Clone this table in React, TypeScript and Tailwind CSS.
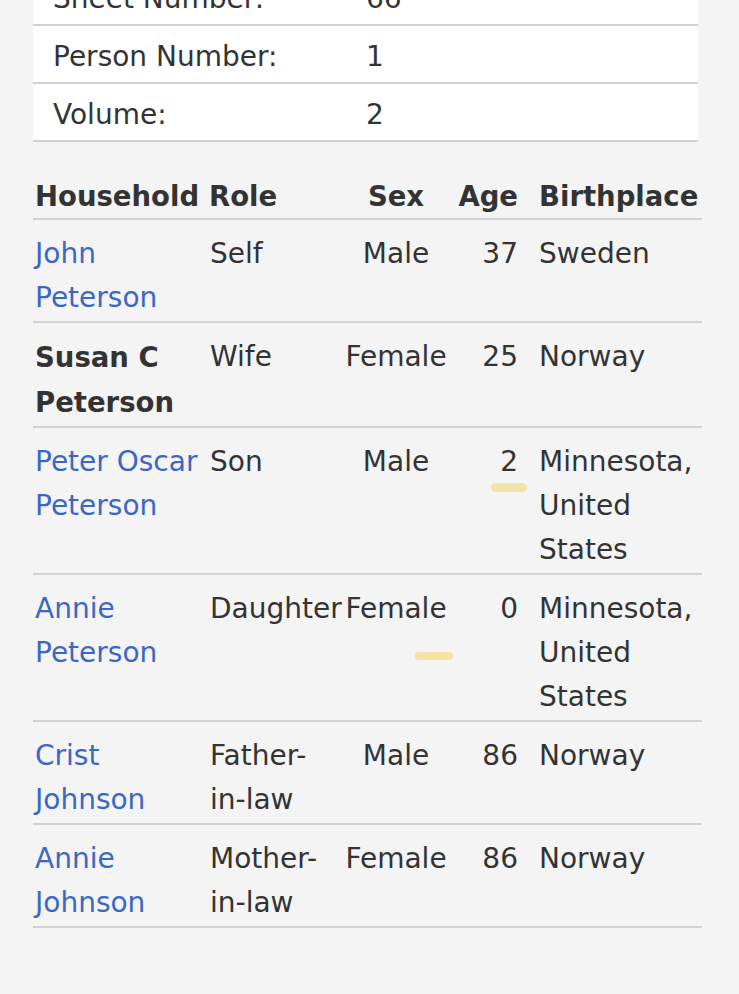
import React from 'react'

type Person = {
  name: string
  link: boolean
  role: string
  sex: string
  age: string
  place: string
  mark?: 'age' | 'sex'
}

const facts = [
  ['Sheet Number:', '66'],
  ['Person Number:', '1'],
  ['Volume:', '2'],
]

const people: Person[] = [
  { name: 'John Peterson', link: true, role: 'Self', sex: 'Male', age: '37', place: 'Sweden' },
  { name: 'Susan C Peterson', link: false, role: 'Wife', sex: 'Female', age: '25', place: 'Norway' },
  { name: 'Peter Oscar Peterson', link: true, role: 'Son', sex: 'Male', age: '2', place: 'Minnesota, United States', mark: 'age' },
  { name: 'Annie Peterson', link: true, role: 'Daughter', sex: 'Female', age: '0', place: 'Minnesota, United States', mark: 'sex' },
  { name: 'Crist Johnson', link: true, role: 'Father-in-law', sex: 'Male', age: '86', place: 'Norway' },
  { name: 'Annie Johnson', link: true, role: 'Mother-in-law', sex: 'Female', age: '86', place: 'Norway' },
]

export default function App() {
  return (
    <div
      className="h-[994px] w-[739px] overflow-hidden bg-[#f4f4f4] text-[28px] leading-[44px] text-[#333]"
      style={{ fontFamily: '"DejaVu Sans", Verdana, sans-serif' }}
    >
      {/* record facts */}
      <div className="-mt-[32px] ml-[33px] w-[665px] bg-white">
        {facts.map(([label, value]) => (
          <div key={label} className="flex border-b-2 border-[#d2d2d2] pt-[9px] pb-[3px]">
            <div className="w-[333px] pl-[20px]">{label}</div>
            <div>{value}</div>
          </div>
        ))}
      </div>

      {/* household */}
      <table className="mt-[32px] ml-[33px] w-[669px] table-fixed border-collapse">
        <colgroup>
          <col className="w-[174px]" />
          <col className="w-[135px]" />
          <col className="w-[108px]" />
          <col className="w-[76px]" />
          <col className="w-[176px]" />
        </colgroup>
        <thead>
          <tr className="border-b-2 border-[#d2d2d2] text-[27.5px] font-bold">
            <th className="pl-[2px] text-left font-bold">Household</th>
            <th className="pl-[2px] text-left font-bold">Role</th>
            <th className="text-center font-bold">Sex</th>
            <th className="pr-[8px] text-right font-bold">Age</th>
            <th className="pl-[13px] text-left font-bold">Birthplace</th>
          </tr>
        </thead>
        <tbody>
          {people.map((p) => (
            <tr key={p.name} className="border-b-2 border-[#d2d2d2] align-top">
              <td className="pl-[2px] pt-[12px] pb-[1px]">
                {p.link ? (
                  <a className="text-[#3b67c4]">{p.name}</a>
                ) : (
                  <span className="text-[27.5px] font-bold">{p.name}</span>
                )}
              </td>
              <td className="pl-[3px] pt-[12px] pb-[1px]">{p.role}</td>
              <td className="relative pt-[12px] pb-[1px] text-center">
                {p.sex}
                {p.mark === 'sex' && (
                  <span className="absolute top-[77px] left-[73px] h-[8px] w-[38px] rounded-full bg-[#f4e3a6] blur-[0.5px]" />
                )}
              </td>
              <td className="relative pr-[8px] pt-[12px] pb-[1px] text-right">
                {p.age}
                {p.mark === 'age' && (
                  <span className="absolute top-[55px] right-[-1px] h-[9px] w-[36px] rounded-full bg-[#f4e3a6] blur-[0.5px]" />
                )}
              </td>
              <td className="pl-[13px] pt-[12px] pb-[1px]">{p.place}</td>
            </tr>
          ))}
        </tbody>
      </table>
    </div>
  )
}
